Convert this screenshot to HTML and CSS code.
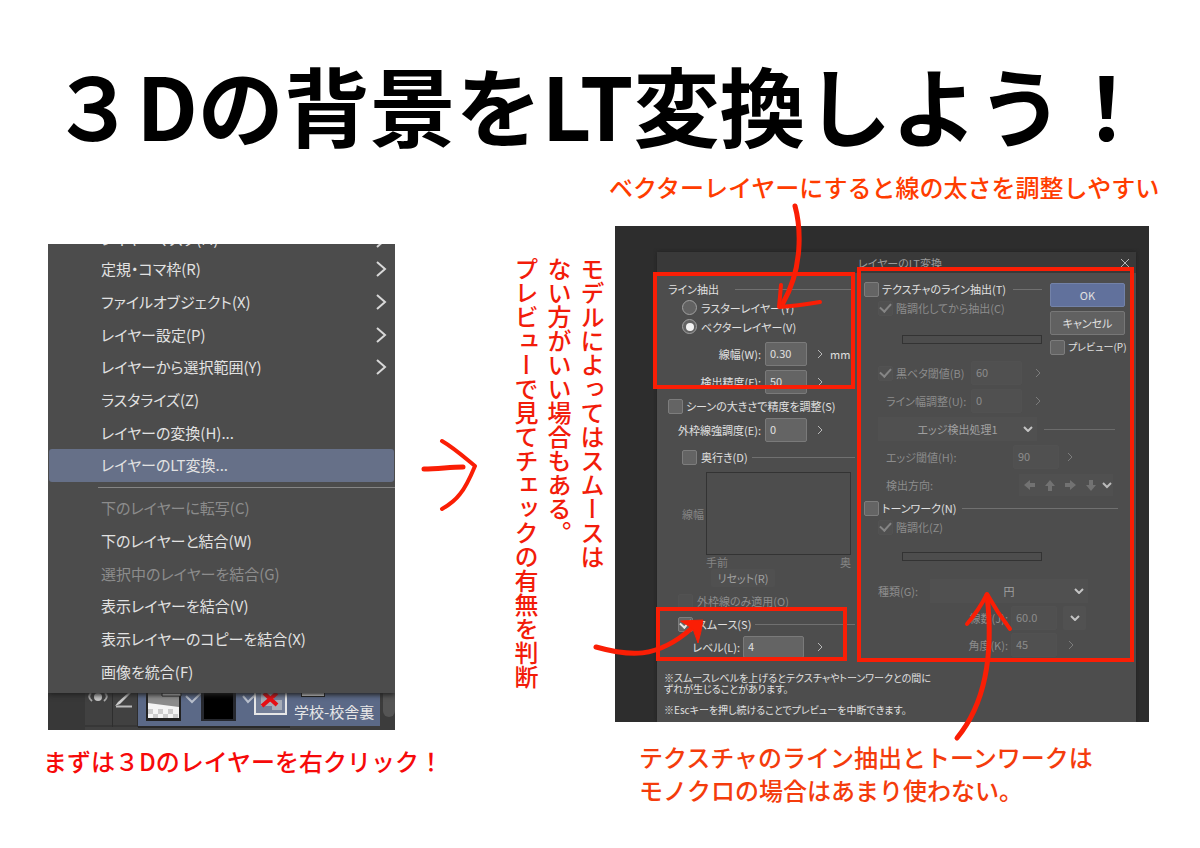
FILE: index.html
```html
<!DOCTYPE html>
<html lang="ja">
<head>
<meta charset="utf-8">
<title>３Dの背景をLT変換しよう！</title>
<link rel="stylesheet" href="styles.css">
</head>
<body>
<main class="page">
  <h1 class="title">３Dの背景をLT変換しよう！</h1>
  <div class="stage">
    <section class="step step-menu">
      <div class="capture">
        <ul class="menu">
          <li class="cut"><button>レイヤーマスク(M)</button><svg class="more" viewBox="0 0 10 16"><path d="M1 1l8 7-8 7"/></svg></li>
          <li><button>定規・コマ枠(R)</button><svg class="more" viewBox="0 0 10 16"><path d="M1 1l8 7-8 7"/></svg></li>
          <li><button>ファイルオブジェクト(X)</button><svg class="more" viewBox="0 0 10 16"><path d="M1 1l8 7-8 7"/></svg></li>
          <li><button>レイヤー設定(P)</button><svg class="more" viewBox="0 0 10 16"><path d="M1 1l8 7-8 7"/></svg></li>
          <li><button>レイヤーから選択範囲(Y)</button><svg class="more" viewBox="0 0 10 16"><path d="M1 1l8 7-8 7"/></svg></li>
          <li><button>ラスタライズ(Z)</button></li>
          <li><button>レイヤーの変換(H)...</button></li>
          <li class="active"><button>レイヤーのLT変換...</button></li>
          <li class="divider" role="separator"></li>
          <li><button disabled>下のレイヤーに転写(C)</button></li>
          <li><button>下のレイヤーと結合(W)</button></li>
          <li><button disabled>選択中のレイヤーを結合(G)</button></li>
          <li><button>表示レイヤーを結合(V)</button></li>
          <li><button>表示レイヤーのコピーを結合(X)</button></li>
          <li><button>画像を統合(F)</button></li>
        </ul>
        <div class="layer">
          <svg class="layer-icons" viewBox="0 0 242 37" width="242" height="37">
            <path d="M0 0h242v37H0z" fill="#414141"/>
            <path d="M0 0h37v37H0z" fill="#383838"/>
            <path d="M37 33h53" stroke="#2e2e2e"/><path d="M64.500 0v34M89.500 0v34" stroke="#2e2e2e"/>
            <path d="M90 0h152v33H90z" fill="#5b6987"/><path d="M90 34h152" stroke="#292929" stroke-width="2"/>
            <circle cx="50" cy="4" r="4" fill="#c6c6c6"/><path d="M43 0q-4 4 1 8M57 0q4 4-1 8" stroke="#aaa" stroke-width="2" fill="none"/>
            <path d="M80 0L70 9l-3 4 5-2L83 0z" fill="#ccc"/><path d="M68 13.500h16" stroke="#bbb" stroke-width="2"/>
            <path d="M98 0h35v28H98z" fill="#222"/><path d="M100 0h31v25h-31z" fill="#f4f4f4"/>
            <path d="M100 0h31v14l-31-4z" fill="#8b8b8b"/><path d="M114 0h19v3h-19z" fill="#ddd" stroke="#222"/>
            <path d="M100 16h5v5h-5zM110 16h5v5h-5zM120 16h5v5h-5zM105 21h5v4h-5zM115 21h5v4h-5zM125 21h5v4h-5z" fill="#ccc"/>
            <path d="M138 3l6 6 9-9M195 3l5 6 7-7" fill="none" stroke="#b9c0cd" stroke-width="2"/>
            <path d="M153 0h35v28h-35z" fill="#26282e"/><path d="M156 0h29v26h-29z" fill="#000"/>
            <path d="M207 0v21h31V0" fill="#747f98" stroke="#e6e6e6" stroke-width="2"/><path d="M213 0h13v13h-13zM224 7h10v10h-10z" fill="#a7adb7"/>
            <path d="M214 13L229 0M216 0l13 12" stroke="#e60f14" stroke-width="4"/>
          </svg>
          <div class="layer-name"><i></i><span>学校-校舎裏</span></div>
          <div class="scroll"></div>
        </div>
      </div>
      <p class="note note-red">まずは３Dのレイヤーを右クリック！</p>
    </section>

    <div class="next">
      <svg class="ink" viewBox="0 0 56 72" width="56" height="72"><path d="M2 30c14 0 26-2 39-2" stroke-width="5"/><path d="M20 2c12 7 22 16 33 25-5 12-9 21-15 28q-6 8-18 15" stroke-width="4"/></svg>
    </div>

    <p class="note note-vertical">モデルによってはスムースは<br>ない方がいい場合もある。<br>プレビューで見てチェックの有無を判断</p>

    <section class="step step-dialog">
      <p class="note note-top">ベクターレイヤーにすると線の太さを調整しやすい</p>
      <div class="backdrop">
        <form class="dialog">
          <header class="bar"><span>レイヤーのLT変換</span><button type="button" aria-label="閉じる"><svg viewBox="0 0 10 10" width="10" height="10"><path d="M1 1l8 8M9 1l-8 8"/></svg></button></header>
          <div class="panes">
            <div class="pane left">
              <div class="row head"><span>ライン抽出</span><hr></div>
              <div class="row radio"><input type="radio" name="kind" id="ras"><label for="ras">ラスターレイヤー(Y)</label></div>
              <div class="row radio"><input type="radio" name="kind" id="vec" checked><label for="vec">ベクターレイヤー(V)</label></div>
              <div class="row field first"><label for="w">線幅(W):</label><input type="text" id="w" value="0.30"><svg class="chev" viewBox="0 0 6 10"><path d="M1 1l4 4-4 4"/></svg><span>mm</span></div>
              <div class="row field"><label for="f">検出精度(F):</label><input type="text" id="f" value="50"><svg class="chev" viewBox="0 0 6 10"><path d="M1 1l4 4-4 4"/></svg></div>
              <div class="row scene"><input type="checkbox" id="sc"><label for="sc">シーンの大きさで精度を調整(S)</label></div>
              <div class="row field"><label for="e">外枠線強調度(E):</label><input type="text" id="e" value="0"><svg class="chev" viewBox="0 0 6 10"><path d="M1 1l4 4-4 4"/></svg></div>
              <div class="row depth"><input type="checkbox" id="d"><label for="d">奥行き(D)</label><hr></div>
              <div class="graph"><span>線幅</span><div class="plot"></div><div class="axis"><span>手前</span><span>奥</span></div></div>
              <div class="row reset"><button type="button" disabled>リセット(R)</button></div>
              <div class="row outline off"><input type="checkbox" id="o" disabled><label for="o">外枠線のみ適用(O)</label></div>
              <div class="row smooth"><input type="checkbox" id="s" checked><label for="s">スムース(S)</label><hr></div>
              <div class="row field level"><label for="l">レベル(L):</label><input type="text" id="l" value="4"><svg class="chev" viewBox="0 0 6 10"><path d="M1 1l4 4-4 4"/></svg></div>
            </div>
            <div class="pane right">
              <div class="upper">
                <div class="texture">
                  <div class="row"><input type="checkbox" id="t"><label for="t">テクスチャのライン抽出(T)</label><hr></div>
                  <div class="row sub off"><input type="checkbox" id="c" checked disabled><label for="c">階調化してから抽出(C)</label></div>
                  <div class="track"></div>
                </div>
                <div class="actions">
                  <button type="button" class="ok">OK</button>
                  <button type="button">キャンセル</button>
                  <div class="row preview"><input type="checkbox" id="p"><label for="p">プレビュー(P)</label></div>
                </div>
              </div>
              <div class="row sub value off"><span class="name"><input type="checkbox" id="b" checked disabled><label for="b">黒ベタ閾値(B)</label></span><input type="text" value="60" aria-label="黒ベタ閾値" disabled><svg class="chev" viewBox="0 0 6 10"><path d="M1 1l4 4-4 4"/></svg></div>
              <div class="row sub value off"><label class="name inset" for="u">ライン幅調整(U):</label><input type="text" id="u" value="0" disabled><svg class="chev" viewBox="0 0 6 10"><path d="M1 1l4 4-4 4"/></svg></div>
              <div class="row sub pick-edge off"><span class="pick"><select aria-label="エッジ検出" disabled><option>エッジ検出処理1</option></select><svg viewBox="0 0 10 6"><path d="M1 1l4 4 4-4"/></svg></span><hr></div>
              <div class="row sub value wide off"><label class="name inset" for="h">エッジ閾値(H):</label><input type="text" id="h" value="90" disabled><svg class="chev" viewBox="0 0 6 10"><path d="M1 1l4 4-4 4"/></svg></div>
              <div class="row sub value dirs off"><span class="name inset">検出方向:</span><svg class="arrows" viewBox="0 0 94 22" width="94" height="22"><g fill="#727272"><path d="M5 11l6-5v3h5v4h-5v3z"/><path d="M31 6l5 6h-3v5h-4v-5h-3z"/><path d="M57 11l-6-5v3h-5v4h5v3z"/><path d="M72 17l-5-6h3V6h4v5h3z"/></g><path d="M84 9l4 4 4-4" fill="none" stroke="#bbb" stroke-width="2"/></svg></div>
              <div class="row tone"><input type="checkbox" id="n"><label for="n">トーンワーク(N)</label><hr></div>
              <div class="row sub off"><input type="checkbox" id="z" checked disabled><label for="z">階調化(Z)</label></div>
              <div class="track track-tone"></div>
              <div class="row type off"><label for="g">種類(G):</label><span class="pick"><select id="g" disabled><option>円</option></select><svg viewBox="0 0 10 6"><path d="M1 1l4 4 4-4"/></svg></span></div>
              <div class="row num off"><label for="j">線数(J):</label><input type="text" id="j" value="60.0" disabled><button type="button" aria-label="線数の候補" disabled><svg viewBox="0 0 10 6"><path d="M1 1l4 4 4-4"/></svg></button></div>
              <div class="row num off"><label for="k">角度(K):</label><input type="text" id="k" value="45" disabled><svg class="chev" viewBox="0 0 6 10"><path d="M1 1l4 4-4 4"/></svg></div>
            </div>
          </div>
          <footer class="hints">
            <p>※スムースレベルを上げるとテクスチャやトーンワークとの間に<br>ずれが生じることがあります。</p>
            <p>※Escキーを押し続けることでプレビューを中断できます。</p>
          </footer>
        </form>
        <svg class="ink overlay" viewBox="615 226 534 496">
          <g stroke-width="4"><path d="M655 274h198v113H655zM859 269h273v391H859zM658 609h187v50H658z"/></g>
          <path d="M795 206c6 22 8 62-12 97" stroke-width="5"/>
          <path d="M781 285q-1 12-2 22 18-1 41-5" stroke-width="4"/>
          <path d="M596 647c32 9 60 13 96-19" stroke-width="5"/>
          <path class="solid" d="M681 621l22-1q-2 13-5 23l-5-14z"/>
          <path d="M957 738c28-34 37-82 30-143" stroke-width="5"/>
          <path d="M967 624q12-14 20-30 10 18 23 35" stroke-width="4"/>
        </svg>
      </div>
      <p class="note note-bottom">テクスチャのライン抽出とトーンワークは<br>モノクロの場合はあまり使わない。</p>
    </section>
  </div>
</main>
</body>
</html>
```
FILE: styles.css
```css
* { box-sizing: border-box; }
body { margin: 0; background: #fff; font-family: "Noto Sans CJK JP", sans-serif; }
p, h1, ul, hr { margin: 0; padding: 0; }
button, input, select { font: inherit; color: inherit; border: 0; padding: 0; margin: 0; background: none; appearance: none; border-radius: 2px; opacity: 1; }
svg path { fill: none; }
svg path[fill], .layer-icons path, .arrows path { fill: revert-layer; }

.page { min-height: 848px; }
.title { padding: 44px 0 4px; text-align: center; font-size: 86px; line-height: 120px; font-weight: 700; color: #000; white-space: nowrap; }
.stage { display: grid; grid-template-columns: minmax(0, 347fr) 105px 115px minmax(0, 534fr); padding: 0 51px 0 48px; }
.note { font-size: 24px; line-height: 33px; font-weight: 500; white-space: nowrap; }
.note-red { color: #f60a0a; margin: 14px 0 0 -5px; }
.note-top { color: #ff3c00; margin: 2px 0 23px -6px; }
.note-bottom { color: #f43c0c; margin: 18px 0 0 24px; }
.note-vertical { color: #f21c0a; writing-mode: vertical-rl; margin: 89px 0 0 10px; justify-self: start; }
.step-menu { padding-top: 76px; }
.next { padding: 271px 0 0 27px; }
.ink { display: block; overflow: visible; }
.ink path { fill: none; stroke: #fa1e05; stroke-linecap: round; stroke-linejoin: round; }
.ink g path { stroke-linejoin: miter; }
.ink .solid { fill: #fa1e05; }

.capture { background: #4c4c4c; overflow: hidden; }
.menu { display: flex; flex-direction: column; height: 449px; list-style: none; color: #e2e2e2; font-size: 15px; font-feature-settings: "palt"; padding-bottom: 5px; position: relative; box-shadow: 0 2px 5px #222; }
.menu li { flex: 1; display: flex; align-items: center; justify-content: space-between; padding: 0 9px 0 53px; }
.menu li.cut { flex: none; height: 9px; align-items: flex-end; overflow: hidden; }
.cut button { margin-bottom: 2px; }
.cut .more { margin-bottom: 5px; }
.menu button { line-height: 24px; white-space: nowrap; }
.menu button:disabled { color: #8c8c8c; }
.menu .active { background: #667088; border-radius: 3px; margin: 0 1px; padding: 0 8px 0 52px; }
.menu .divider { flex: none; height: 1px; margin: 5px 0 4px 50px; background: #858585; padding: 0; }
.more { width: 10px; height: 16px; flex: none; overflow: visible; }
.more path { stroke: #d8d8d8; stroke-width: 2; }
.layer { display: flex; height: 37px; background: #3c3c3c; overflow: hidden; }
.layer-icons { flex: none; }
.layer-name { flex: 1; height: 33px; background: #5b6987; color: #e6e6e6; font-size: 15px; line-height: 20px; white-space: nowrap; padding-left: 4px; }
.layer-name i { display: block; width: 24px; height: 4px; margin: 0 0 5px 7px; background: #ddd; border: 1px solid #222; border-top: 0; }
.scroll { width: 12px; height: 24px; margin-left: 3px; background: #555; border-radius: 0 0 6px 6px; }

.backdrop { position: relative; background: #2d2d2d; padding: 26px 13px 0 42px; }
.overlay { position: absolute; inset: 0; width: 100%; height: 100%; pointer-events: none; }
.dialog { background: #4d4d4d; color: #e0e0e0; font-size: 11px; line-height: 16px; font-feature-settings: "palt"; white-space: nowrap; box-shadow: 0 0 4px #222; clip-path: inset(-4px -4px 0); }
.bar { display: flex; align-items: center; height: 21px; background: #393939; color: #9a9a9a; padding: 0 6px 0 201px; justify-content: space-between; }
.bar button { display: flex; }
.bar path { stroke: #b5b5b5; stroke-width: 1; }
.panes { display: grid; grid-template-columns: 198px minmax(0, 1fr); padding-top: 7px; min-height: 399px; align-items: start; }
.row { display: flex; align-items: center; height: 18px; }
hr { flex: 1; height: 1px; border: 0; background: #707070; }
input[type="checkbox"] { flex: none; width: 15px; height: 15px; background: #646464; border: 1px solid #7d7d7d; display: grid; place-items: center; }
input[type="checkbox"]:checked::before { content: ""; width: 9px; height: 5px; border: solid #e6e6e6; border-width: 0 0 2px 2px; rotate: -48deg; margin-bottom: 3px; }
input[type="radio"] { flex: none; width: 15px; height: 15px; border: 1px solid #a0a0a0; border-radius: 50%; background: #626262; display: grid; place-items: center; }
input[type="radio"]:checked::before { content: ""; width: 8px; height: 8px; border-radius: 50%; background: #f2f2f2; }
input[type="text"] { flex: none; width: 42px; height: 24px; background: #646464; border: 1px solid #7a7a7a; padding: 0 4px 2px; font-size: 11px; }
.chev { flex: none; width: 6px; height: 10px; }
.chev path { stroke: #b8b8b8; stroke-width: 1; }
.off { color: #8c8c8c; }
.off hr { background: #6b6b6b; }
.off .chev path { stroke: #7c7c7c; }
.off input[type="text"] { background: #505050; border-color: #515151; }
.off input[type="checkbox"] { background: #505050; border-color: #525252; }
.off input[type="checkbox"]::before { border-color: #858585; }

.left .head { padding-left: 11px; gap: 16px; }
.radio { height: 19px; padding-left: 25px; gap: 4px; }
.field { height: 28px; }
.field.first { margin-top: 4px; }
.field label { width: 104px; text-align: right; margin-right: 4px; }
.field .chev { margin: 0 7px 0 10px; }
.scene { height: 20px; padding-left: 11px; gap: 3px; }
.depth { padding-left: 25px; gap: 4px; margin-top: 4px; }
.graph { display: grid; grid-template-columns: auto 1fr; align-items: center; margin: 6px 4px 0 25px; color: #858585; column-gap: 2px; }
.plot { height: 83px; border: 1px solid #333; }
.axis { grid-column: 2; display: flex; justify-content: space-between; height: 14px; line-height: 14px; }
.reset { padding-left: 54px; }
.reset button { width: 64px; height: 18px; background: #505050; color: #a0a0a0; }
.outline { padding-left: 21px; gap: 4px; margin-top: 5px; }
.smooth { padding-left: 21px; gap: 4px; margin-top: 5px; }
.level { height: 22px; margin-top: 3px; }
.level label { width: 83px; margin-right: 3px; }
.level input[type="text"] { width: 61px; height: 22px; }
.level .chev { margin-left: 13px; }

.right { padding-left: 9px; }
.right .row { gap: 3px; }
.upper { display: grid; grid-template-columns: minmax(0, 1fr) 75px; column-gap: 8px; padding-right: 11px; height: 79px; }
.upper hr { margin-left: 4px; }
.sub { padding-left: 14px; }
.right .sub:not(.value):not(.pick-edge) { height: 20px; }
.track { width: 140px; height: 9px; margin: 17px 0 0 38px; border: 1px solid #333; }
.track-tone { margin-top: 15px; }
.actions { display: grid; grid-template-columns: minmax(0, 1fr); align-content: start; row-gap: 4px; padding-top: 3px; }
.actions button { height: 24px; background: #616161; border: 1px solid #777; }
.actions .ok { background: #61719c; border-color: #7382a8; }
.preview { height: 16px; font-size: 10px; }
.right .value { height: 28px; gap: 0; }
.name { width: 93px; display: flex; align-items: center; gap: 3px; }
.inset { padding-left: 8px; }
.value input[type="text"] { width: 51px; height: 24px; }
.value .chev { margin-left: 13px; }
.wide .name { width: 135px; }
.wide input[type="text"] { width: 46px; }
.wide .chev { margin-left: 8px; }
.dirs .inset { width: 141px; }
.arrows { background: #505050; }
.pick-edge { height: 28px; padding-right: 21px; }
.pick { display: grid; align-items: center; background: #505050; height: 24px; }
.pick select, .pick svg { grid-area: 1 / 1; }
.pick select { text-align-last: center; color: #a0a0a0; height: 24px; }
.pick svg, .num button svg { width: 10px; height: 6px; justify-self: end; margin-right: 4px; }
.pick path, .num button path { stroke: #c4c4c4; stroke-width: 2; }
.right .pick-edge { height: 28px; }
.pick-edge .pick { width: 159px; }
.pick-edge hr { margin-left: 4px; }
.tone { padding-right: 18px; }
.tone hr { margin-left: 3px; }
.right .type { height: 26px; margin-top: 17px; padding-left: 14px; }
.type label { width: 49px; }
.type .pick { width: 158px; }
.right .num { height: 27px; }
.num label { width: 144px; text-align: right; }
.right .num input { width: 46px; height: 24px; margin-right: 3px; }
.num button { width: 23px; height: 24px; background: #515151; display: grid; place-items: center; }
.num button svg { margin: 0; justify-self: center; }
.num .chev { margin-left: 5px; }
.hints { padding: 0 0 7px 7px; font-size: 10px; line-height: 11px; }
.hints p + p { margin-top: 10px; }
```
